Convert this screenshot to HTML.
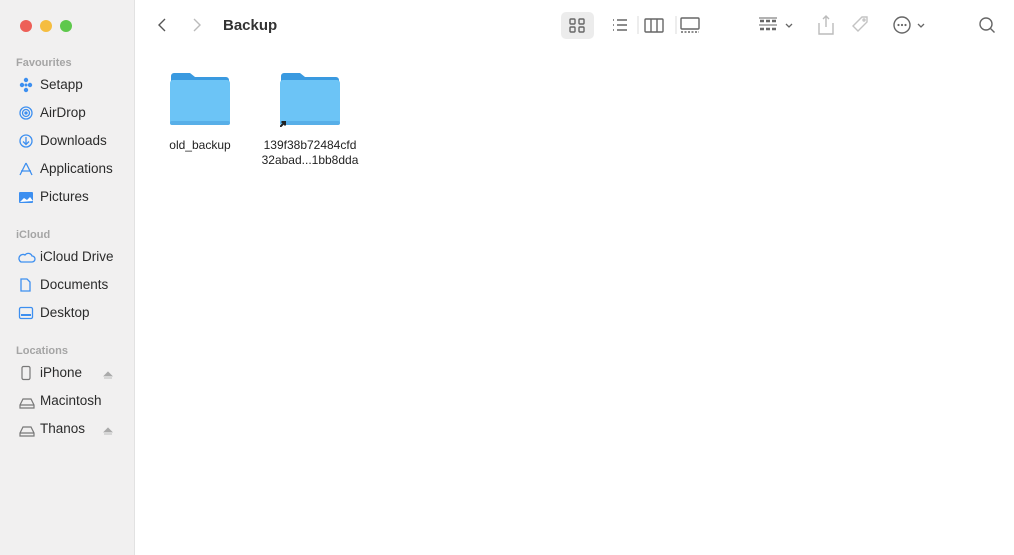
<!DOCTYPE html>
<html><head><meta charset="utf-8"><style>
*{margin:0;padding:0;box-sizing:border-box}
body{width:1014px;height:555px;overflow:hidden;background:#fff;font-family:"Liberation Sans",sans-serif;position:relative}
#sb{position:absolute;left:0;top:0;width:135px;height:555px;background:#f1f0f0;border-right:1px solid #e2e2e2}
.dot{position:absolute;top:20px;width:12px;height:12px;border-radius:50%}
.h{position:absolute;left:16px;font-size:11px;color:#a5a5a5;font-weight:bold}
.it{position:absolute;left:40px;font-size:13.5px;color:#2b2b2b}
.t{position:absolute;font-size:12px;color:#222;text-align:center;line-height:14.5px}
svg{position:absolute}
</style></head><body>
<div id="sb">
<div class="dot" style="left:20px;background:#ed5f57"></div>
<div class="dot" style="left:40px;background:#f5bd3f"></div>
<div class="dot" style="left:60px;background:#5ec84c"></div>
<div class="h" style="top:57px">Favourites</div>
<div class="it" style="top:77px">Setapp</div>
<div class="it" style="top:105px">AirDrop</div>
<div class="it" style="top:133px">Downloads</div>
<div class="it" style="top:161px">Applications</div>
<div class="it" style="top:189px">Pictures</div>
<div class="h" style="top:229px">iCloud</div>
<div class="it" style="top:249px">iCloud Drive</div>
<div class="it" style="top:277px">Documents</div>
<div class="it" style="top:305px">Desktop</div>
<div class="h" style="top:345px">Locations</div>
<div class="it" style="top:365px">iPhone</div>
<div class="it" style="top:393px">Macintosh</div>
<div class="it" style="top:421px">Thanos</div>
<svg width="135" height="450" style="left:0;top:0" fill="none" stroke="#3d8ff0" stroke-width="1.3">
<g fill="#3d8ff0" stroke="none"><circle cx="26" cy="80" r="2.2"/><circle cx="22" cy="85" r="2.2"/><circle cx="30" cy="85" r="2.2"/><circle cx="26" cy="90" r="2.2"/><circle cx="26" cy="85" r="1.5"/></g>
<circle cx="26" cy="113" r="6"/><circle cx="26" cy="113" r="3.5"/><circle cx="26" cy="113" r="1" fill="#3d8ff0"/>
<circle cx="26" cy="141" r="6"/><path d="M26 137v7M23 141.5l3 3 3-3"/>
<path d="M26 163l-6 12M26 163l6 12M21 171h10"/>
<rect x="19" y="192" width="14" height="11" rx="1" fill="#3d8ff0" stroke="none"/>
<path d="M20 202l4-4 3 2 3-3 3 4z" fill="#fff" stroke="none"/>
<path d="M21 262h11a3 3 0 0 0 0-6 4 4 0 0 0-7-1 3 3 0 0 0-4 7z"/>
<path d="M21 279h6l3 3v9h-9z"/>
<rect x="19.5" y="307.5" width="13" height="11" rx="1.5"/><path d="M21 315h10" stroke-width="2"/>
</svg>
<svg width="135" height="450" style="left:0;top:0" fill="none" stroke="#777" stroke-width="1.2">
<rect x="22" y="366.5" width="8" height="13" rx="1.5"/>
<path d="M20 405l3-6h8l3 6v3h-14z M20 405h14"/>
<path d="M20 433l3-6h8l3 6v3h-14z M20 433h14"/>
<path d="M104 376l4-4 4 4z M104 378h8" fill="#aaa" stroke="#aaa" stroke-width="0.8"/>
<path d="M104 432l4-4 4 4z M104 434h8" fill="#aaa" stroke="#aaa" stroke-width="0.8"/>
</svg>
</div>
<svg width="880" height="50" style="left:135px;top:0" fill="none" stroke="#666" stroke-width="1.4">
<path d="M30 19l-6 6 6 6" stroke="#555"/>
<path d="M59 19l6 6-6 6" stroke="#bbb"/>
<rect x="426" y="12" width="33" height="27" rx="5" fill="#ececec" stroke="none"/>
<rect x="435" y="19" width="5" height="5" rx="1"/><rect x="444" y="19" width="5" height="5" rx="1"/><rect x="435" y="27" width="5" height="5" rx="1"/><rect x="444" y="27" width="5" height="5" rx="1"/>
<path d="M478 20h1M478 25h1M478 30h1M482 20h10M482 25h10M482 30h10"/>
<path d="M503 16v18" stroke="#e5e5e5"/>
<rect x="510" y="19" width="18" height="13" rx="1"/><path d="M516 19v13M522 19v13"/>
<path d="M541 16v18" stroke="#e5e5e5"/>
<rect x="546" y="18" width="18" height="11" rx="1"/><path d="M546 32h18" stroke-dasharray="2 1.5"/>
<path d="M624 18h18M624 25h18" stroke-width="1"/><path d="M625 21h16M625 29h16" stroke-dasharray="4 2" stroke-width="2.5"/>
<path d="M651 24l3 3 3-3" stroke-width="1.3"/>
<path d="M684 23v11h14V23M688 19l3-3 3 3M691 16v11" stroke="#bbb"/>
<path d="M718 26l9-9h5v5l-9 9z" stroke="#c3c3c3"/><circle cx="729" cy="20" r="1" stroke="#c3c3c3"/>
<circle cx="767" cy="25" r="8"/><g fill="#666" stroke="none"><circle cx="763.5" cy="25" r="1.1"/><circle cx="767" cy="25" r="1.1"/><circle cx="770.5" cy="25" r="1.1"/></g>
<path d="M783 24l3 3 3-3" stroke-width="1.3"/>
<circle cx="851" cy="24" r="6"/><path d="M855.5 28.5l4 4"/>
</svg>
<div style="position:absolute;left:223px;top:17px;font-size:15px;font-weight:bold;color:#333">Backup</div>
<svg width="60" height="55" style="left:170px;top:72px"><path d="M1 4a3 3 0 0 1 3-3h16l5 4h31a3 3 0 0 1 3 3v40H1z" fill="#3a9ae0"/><rect x="0" y="8" width="60" height="45" rx="3" fill="#6cc4f6"/><rect x="0" y="49" width="60" height="4" rx="2" fill="#58afe8"/></svg>
<svg width="60" height="55" style="left:280px;top:72px"><path d="M1 4a3 3 0 0 1 3-3h16l5 4h31a3 3 0 0 1 3 3v40H1z" fill="#3a9ae0"/><rect x="0" y="8" width="60" height="45" rx="3" fill="#6cc4f6"/><rect x="0" y="49" width="60" height="4" rx="2" fill="#58afe8"/><path d="M0 55l5-5M1.5 50h3.5v3.5" stroke="#222" stroke-width="2" fill="none"/></svg>
<div class="t" style="left:150px;top:138px;width:100px">old_backup</div>
<div class="t" style="left:250px;top:138px;width:120px">139f38b72484cfd<br>32abad...1bb8dda</div>
</body></html>
